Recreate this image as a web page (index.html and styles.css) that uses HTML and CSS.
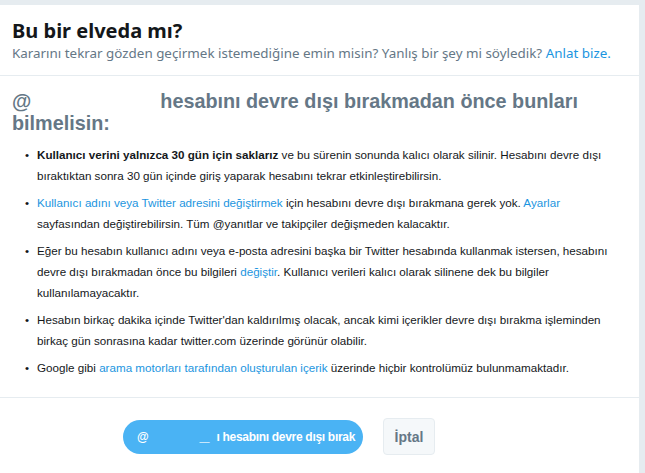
FILE: index.html
```html
<!DOCTYPE html>
<html lang="tr">
<head>
    <meta charset="UTF-8">
    <meta name="viewport" content="width=device-width, initial-scale=1.0">
    <title>Hesabı devre dışı bırak</title>
    <link rel="stylesheet" href="styles.css">
</head>
<body>
    <div class="panel">
        <div class="panel-header">
            <h1>Bu bir elveda mı?</h1>
            <p>Kararını tekrar gözden geçirmek istemediğine emin misin? Yanlış bir şey mi söyledik? <a href="#">Anlat bize.</a></p>
        </div>

        <div class="panel-body">
            <h2>@<span class="handle"></span>hesabını devre dışı bırakmadan önce bunları bilmelisin:</h2>
            <ul class="notice-list">
                <li><b>Kullanıcı verini yalnızca 30 gün için saklarız</b> ve bu sürenin sonunda kalıcı olarak silinir. Hesabını devre dışı bıraktıktan sonra 30 gün içinde giriş yaparak hesabını tekrar etkinleştirebilirsin.</li>
                <li><a href="#">Kullanıcı adını veya Twitter adresini değiştirmek</a> için hesabını devre dışı bırakmana gerek yok. <a href="#">Ayarlar</a> sayfasından değiştirebilirsin. Tüm @yanıtlar ve takipçiler değişmeden kalacaktır.</li>
                <li>Eğer bu hesabın kullanıcı adını veya e-posta adresini başka bir Twitter hesabında kullanmak istersen, hesabını devre dışı bırakmadan önce bu bilgileri <a href="#">değiştir</a>. Kullanıcı verileri kalıcı olarak silinene dek bu bilgiler kullanılamayacaktır.</li>
                <li>Hesabın birkaç dakika içinde Twitter'dan kaldırılmış olacak, ancak kimi içerikler devre dışı bırakma işleminden birkaç gün sonrasına kadar twitter.com üzerinde görünür olabilir.</li>
                <li>Google gibi <a href="#">arama motorları tarafından oluşturulan içerik</a> üzerinde hiçbir kontrolümüz bulunmamaktadır.</li>
            </ul>
        </div>

        <div class="panel-footer">
            <button class="btn-primary">@<span class="btn-handle">__</span>ı hesabını devre dışı bırak</button>
            <button class="btn-cancel">İptal</button>
        </div>
    </div>
</body>
</html>
```

FILE: styles.css
```css
* {
    margin: 0;
    padding: 0;
    box-sizing: border-box;
}

body {
    background-color: #e6ecf0;
    font-family: 'Noto Sans', 'Open Sans', sans-serif;
    color: #14171a;
    padding: 5px 6px 0 0;
}

a {
    color: #1b95e0;
    text-decoration: none;
}

.panel {
    background: #fff;
    height: 468px;
}

.panel-header {
    padding: 14px 12px 7px;
    border-bottom: 1px solid #e6ecf0;
    height: 71px;
}

.panel-header h1 {
    font-size: 20px;
    font-weight: 700;
    line-height: 24px;
    color: #14171a;
}

.panel-header p {
    font-size: 13.4px;
    line-height: 20px;
    color: #657786;
    white-space: nowrap;
}

.panel-body {
    padding: 14px 12px 0;
    height: 322px;
    border-bottom: 1px solid #e6ecf0;
}

.panel-body h2 {
    font-family: 'Liberation Sans', Arial, sans-serif;
    font-size: 19.8px;
    font-weight: 700;
    line-height: 22px;
    color: #657786;
    padding-right: 40px;
}

.handle {
    display: inline-block;
    width: 129px;
}

.notice-list {
    margin-top: 10px;
    padding: 0 5px 0 13px;
    font-family: 'Liberation Sans', Arial, sans-serif;
    font-size: 11.65px;
    line-height: 21px;
    color: #14171a;
}

.notice-list li {
    margin-bottom: 6px;
    padding-left: 12px;
    list-style: none;
    position: relative;
}

.notice-list li::before {
    content: "•";
    position: absolute;
    left: 0;
    top: 0;
}

.notice-list b {
    font-weight: 700;
}

.panel-footer {
    display: flex;
    align-items: center;
    gap: 20px;
    padding: 20px 0 0 123px;
}

.btn-primary {
    font-family: 'Liberation Sans', Arial, sans-serif;
    background: #4ab3f4;
    color: #fff;
    border: none;
    border-radius: 17px;
    height: 34px;
    width: 240px;
    font-size: 12px;
    letter-spacing: -0.3px;
    font-weight: 700;
    text-align: left;
    padding-left: 14px;
    white-space: nowrap;
}

.btn-handle {
    display: inline-block;
    margin-left: 51px;
    margin-right: 7px;
    font-size: 9px;
    letter-spacing: 0;
    font-weight: 400;
}

.btn-cancel {
    font-family: 'Liberation Sans', Arial, sans-serif;
    background: #f5f8fa;
    color: #657786;
    border: 1px solid #e6ecf0;
    border-radius: 4px;
    height: 37px;
    width: 52px;
    font-size: 14px;
    font-weight: 700;
}
```
